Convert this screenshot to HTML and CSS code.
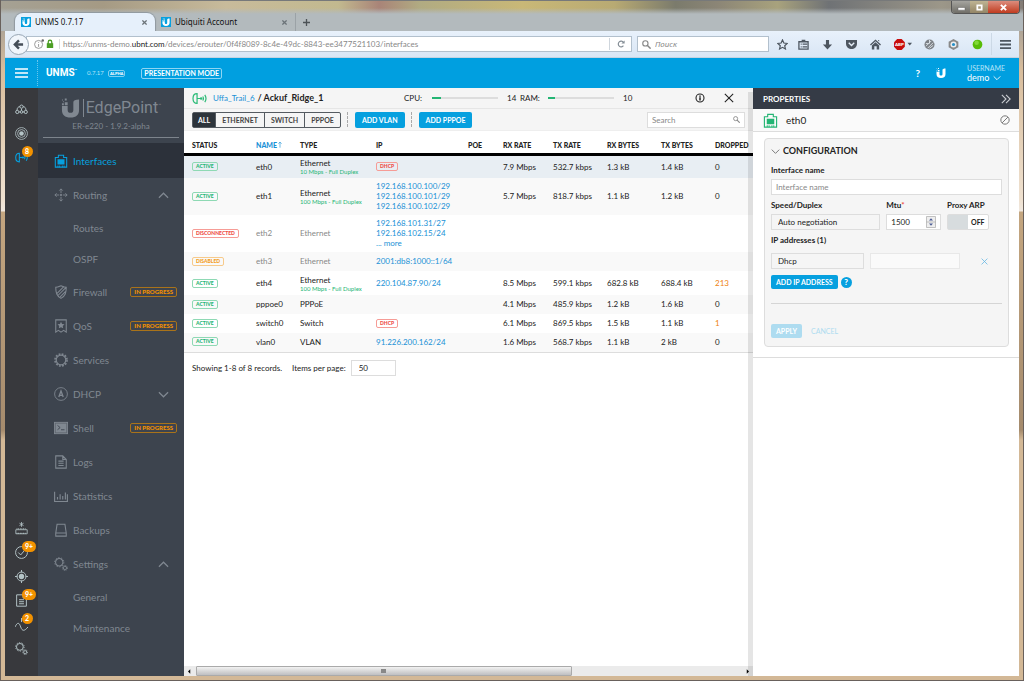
FILE: index.html
```html
<!doctype html>
<html lang="en">
<head>
  <meta charset="UTF-8">
  <meta name="viewport" content="width=device-width, initial-scale=1.0">
  <title>UNMS 0.7.17</title>
  <link rel="stylesheet" href="styles.css">
</head>
<body>
  <svg class="defs" aria-hidden="true">
    <symbol id="i-u" viewBox="0 0 20 20"><path fill="currentColor" d="M1 1h1v1H1zM4 0h2v2H4zM2 3h1v1H2zM4 4h3v3H4zM1 5h2v2H1z"/><path fill="currentColor" d="M1 8h6v4c0 2 1 3 3 3s3-1 3-3V4c0-2 2-3 6-3v11c0 5-3 8-9 8s-9-3-9-8z"/></symbol>
    <symbol id="i-port" viewBox="0 0 16 16"><path fill="none" stroke="currentColor" stroke-width="1.200" d="M1.500 4H5V1.500h6V4h3.500v11h-13z"/><path fill="currentColor" d="M4 6h8v6H4zM4 13h1v2H4zM6 13h1v2H6zM9 13h1v2H9zM11 13h1v2h-1z"/></symbol>
    <symbol id="i-route" viewBox="0 0 16 16"><path fill="none" stroke="currentColor" d="M8 1v5M8 10v5M1 8h5M10 8h5M6 3l2-2 2 2M6 13l2 2 2-2M3 6L1 8l2 2M13 6l2 2-2 2"/><circle cx="8" cy="8" r="1.200" fill="currentColor"/></symbol>
    <symbol id="i-shield" viewBox="0 0 16 16"><path fill="none" stroke="currentColor" stroke-width="1.200" d="M2 2.500C5 2.500 6 1.500 8 .8c2 .7 3 1.700 6 1.700C14 9 13 12.500 8 15.300 3 12.500 2 9 2 2.500zM3.500 9.500l8-8M4.500 12l9-9M7 13.500l6-6"/></symbol>
    <symbol id="i-qos" viewBox="0 0 16 16"><path fill="none" stroke="currentColor" stroke-width="1.200" d="M2 1h12v14l-3-2-3 2-3-2-3 2z"/><path fill="currentColor" d="M8 3l1.200 2.600 2.800.3-2 2 .5 2.800L8 9.300l-2.500 1.400.5-2.800-2-2 2.800-.3z"/></symbol>
    <symbol id="i-gear" viewBox="0 0 16 16"><circle cx="8" cy="8" r="5.500" fill="none" stroke="currentColor" stroke-width="1.400"/><circle cx="8" cy="8" r="6.900" fill="none" stroke="currentColor" stroke-width="1.800" stroke-dasharray="2.100 1.510"/></symbol>
    <symbol id="i-dhcp" viewBox="0 0 16 16"><circle cx="8" cy="8" r="7.300" fill="none" stroke="currentColor"/><path fill="none" stroke="currentColor" stroke-width="1.500" d="M5.500 11.500L8 4.500l2.500 7M6.500 9.500h3"/></symbol>
    <symbol id="i-shell" viewBox="0 0 16 16"><path fill="currentColor" d="M0 1h16v14H0z"/><path fill="none" stroke="#3d444e" d="M1.500 2.500h13v11h-13z" stroke-width=".5"/><path fill="none" stroke="#3d444e" d="M4 5l3 2.500L4 10M8 10h4"/></symbol>
    <symbol id="i-doc" viewBox="0 0 16 16"><path fill="none" stroke="currentColor" stroke-width="1.200" d="M2 1h8l4 4v10H2zM10 1v4h4M5 7h6M5 9.500h6M5 12h6"/></symbol>
    <symbol id="i-stats" viewBox="0 0 16 16"><path fill="none" stroke="currentColor" stroke-width="1.300" d="M.7 3v11.300H16M4 12V9M7 12V6M10 12V8M13 12V4M15.300 14V6"/></symbol>
    <symbol id="i-backup" viewBox="0 0 16 16"><path fill="none" stroke="currentColor" stroke-width="1.200" d="M3.500 1.500h9l1.500 10v3.500H2v-3.500zM2 11.500h12"/></symbol>
    <symbol id="i-gears" viewBox="0 0 16 16"><g fill="none" stroke="currentColor"><circle cx="6" cy="6" r="4.200" stroke-width="1.200"/><circle cx="6" cy="6" r="5.300" stroke-dasharray="1.600 1.700"/><circle cx="12.500" cy="12.500" r="1.900"/><circle cx="12.500" cy="12.500" r="2.900" stroke-dasharray="1.200 1.100"/></g></symbol>
    <symbol id="i-sites" viewBox="0 0 16 16"><g fill="none" stroke="currentColor" stroke-width="1.200"><circle cx="8" cy="4.500" r="2"/><circle cx="2.800" cy="11" r="2"/><circle cx="13.200" cy="11" r="2"/><circle cx="8" cy="11" r="1.600"/><path d="M8 7v2.500M2.500 9c0-3 1.500-4.500 3.500-4.500M13.500 9c0-3-1.500-4.500-3.500-4.500M5 11h1.500M9.500 11H11"/></g></symbol>
    <symbol id="i-target" viewBox="0 0 16 16"><g fill="none" stroke="currentColor"><circle cx="8" cy="8" r="7.300"/><circle cx="8" cy="8" r="4.800"/></g><circle cx="8" cy="8" r="2.800" fill="currentColor"/></symbol>
    <symbol id="i-device" viewBox="0 0 18 16"><path fill="none" stroke="currentColor" stroke-width="1.500" d="M6 2C2.500 2 1 5 1 8s1.500 6 5 6zM6 8h5M13 5.500c1 1.500 1 3.500 0 5M15.500 3.500c2 3 2 6 0 9"/><circle cx="11" cy="8" r="1.500" fill="currentColor"/></symbol>
    <symbol id="i-router" viewBox="0 0 16 16"><path fill="none" stroke="currentColor" d="M8 0v6M5.500 1.500l5 3M10.500 1.500l-5 3M1 9.500h14v5H1z"/><path fill="none" stroke="currentColor" stroke-width="1.500" stroke-dasharray="1 1" d="M2 8.500h12M2 14h12"/></symbol>
    <symbol id="i-check" viewBox="0 0 16 16"><path fill="none" stroke="currentColor" stroke-width="1.200" d="M8 .7a7.300 7.300 0 1 0 0 14.600A7.300 7.300 0 1 0 8 .7zM4 8l3 3 5-6"/></symbol>
    <symbol id="i-aim" viewBox="0 0 16 16"><circle cx="8" cy="8" r="3.300" fill="currentColor"/><path fill="none" stroke="currentColor" stroke-width="1.200" d="M8 2.500a5.500 5.500 0 1 0 0 11 5.500 5.500 0 1 0 0-11zM8 0v3M8 13v3M0 8h3M13 8h3"/></symbol>
    <symbol id="i-wave" viewBox="0 0 16 16"><path fill="none" stroke="currentColor" stroke-width="1.200" d="M0 11c3-6 5-6 7 0s5 5 9 0M8 0v5"/></symbol>
    <symbol id="i-up" viewBox="0 0 12 12"><path fill="none" stroke="currentColor" stroke-width="1.300" d="M1 8.500l5-5 5 5"/></symbol>
    <symbol id="i-down" viewBox="0 0 12 12"><path fill="none" stroke="currentColor" stroke-width="1.300" d="M1 3.500l5 5 5-5"/></symbol>
    <symbol id="i-x" viewBox="0 0 12 12"><path fill="none" stroke="currentColor" stroke-width="1.300" d="M1 1l10 10M11 1L1 11"/></symbol>
    <symbol id="i-x-bold" viewBox="0 0 12 12"><path fill="none" stroke="currentColor" stroke-width="3" d="M1 1l10 10M11 1L1 11"/></symbol>
    <symbol id="i-search" viewBox="0 0 12 12"><circle cx="4.500" cy="4.500" r="3.500" fill="none" stroke="currentColor" stroke-width="1.500"/><path stroke="currentColor" stroke-width="2" d="M7 7l4.500 4.500"/></symbol>
  </svg>

  <div class="window">
    <div class="titlebar">
      <div class="tabs">
        <div class="tab active"><span class="favicon"><svg><use href="#i-u"/></svg></span><span class="tab-name">UNMS 0.7.17</span><button class="tab-close" aria-label="Close tab"><svg><use href="#i-x-bold"/></svg></button></div>
        <div class="tab"><span class="favicon"><svg><use href="#i-u"/></svg></span><span class="tab-name">Ubiquiti Account</span><button class="tab-close" aria-label="Close tab"><svg><use href="#i-x-bold"/></svg></button></div>
        <button class="new-tab" aria-label="New tab"><svg viewBox="0 0 8 8"><path stroke="#4c5256" stroke-width="1.500" d="M4 0v8M0 4h8"/></svg></button>
      </div>
      <div class="win-buttons">
        <button aria-label="Minimize"><svg viewBox="0 0 10 8"><path fill="#fff" stroke="#555" stroke-width=".5" d="M1 4h8v3H1z"/></svg></button>
        <button class="max" aria-label="Maximize"><svg viewBox="0 0 10 8"><path fill="none" stroke="#fff" stroke-width="2" d="M2.500 1.500h5v5h-5z"/></svg></button>
        <button class="close" aria-label="Close"><svg viewBox="0 0 10 8"><path stroke="#fff" stroke-width="2.200" d="M2 1l6 6M8 1L2 7"/></svg></button>
      </div>
    </div>

    <div class="navbar">
      <button class="back" aria-label="Back"><svg viewBox="0 0 12 12"><path fill="none" stroke="#454e58" stroke-width="2.600" d="M6.500 1.500L2 6l4.500 4.500M2 6h9"/></svg></button>
      <div class="url">
        <svg class="info" viewBox="0 0 12 12"><circle cx="5.500" cy="6.500" r="4.800" fill="none" stroke="#888"/><path stroke="#888" d="M5.500 6v3.500M5.500 3.500v1"/><circle cx="10.500" cy="1.800" r="1.500" fill="#666"/></svg>
        <svg class="lock" viewBox="0 0 10 12"><path fill="#4c9e24" d="M1 5h8v6H1z"/><path fill="none" stroke="#4c9e24" stroke-width="1.600" d="M2.800 6V3.500a2.200 2.200 0 0 1 4.400 0V6"/></svg>
        <span class="address">https://unms-demo.<b>ubnt.com</b>/devices/erouter/0f4f8089-8c4e-49dc-8843-ee3477521103/interfaces</span>
        <button class="reload" aria-label="Reload"><svg viewBox="0 0 10 10"><path fill="none" stroke="#858e96" stroke-width="1.500" d="M8 7a3.500 3.500 0 1 1 0-4"/><path fill="#858e96" d="M9.500.5v4h-4z"/></svg></button>
      </div>
      <label class="web-search"><svg><use href="#i-search"/></svg><input type="text" placeholder="Поиск" aria-label="Поиск"></label>
      <div class="tools">
        <svg viewBox="0 0 12 12"><path fill="none" stroke="#4d5660" stroke-width="1.300" d="M6 1l1.500 3.400 3.600.4-2.700 2.500.8 3.600L6 9.100l-3.200 1.800.8-3.600L.9 4.800l3.600-.4z"/></svg>
        <svg viewBox="0 0 12 12"><path fill="none" stroke="#4d5660" stroke-width="1.400" d="M1 3h10v8H1zM3 5.500h1M5 5.500h5M3 8.500h1M5 8.500h5M4 1.500h4"/></svg>
        <svg viewBox="0 0 12 12"><path fill="#4d5660" d="M4.300 1h3.400v5H11l-5 5.500L1 6h3.300z"/></svg>
        <svg viewBox="0 0 12 12"><path fill="#4d5660" d="M0 1h12v4c0 4-3 6-6 6S0 9 0 5z"/><path fill="none" stroke="#e5eef8" stroke-width="1.500" d="M3 4l3 3 3-3"/></svg>
        <svg viewBox="0 0 12 12"><path fill="#4d5660" d="M6 .5L12 6l-1 1-5-4.500L1 7 0 6zM2 7l4-3.500L10 7v4.500H7.300V8H4.700v3.500H2zM8.500 1H10v2z"/></svg>
        <svg class="abp" viewBox="0 0 20 12"><path fill="#c80d0d" d="M3.500 0h5L12 3.500v5L8.500 12h-5L0 8.500v-5z"/><text x="1" y="8" font-family="Lato, sans-serif" font-size="5" font-weight="900" fill="#fff">ABP</text><path fill="#4d5660" d="M15 4h5l-2.500 3z"/></svg>
        <svg viewBox="0 0 12 12"><circle cx="6" cy="6" r="5.500" fill="#7c8186"/><path fill="none" stroke="#dfe5ea" d="M2 8l6-6M4 10l6-6M6 5V1M2 5h3M6 10l4-3"/></svg>
        <svg viewBox="0 0 12 12"><path fill="#898989" d="M6 0l5.300 3v6L6 12 .7 9V3z"/><circle cx="6" cy="6" r="3.300" fill="#eee"/><circle cx="6" cy="6" r="1.700" fill="#2790c8"/></svg>
        <svg viewBox="0 0 12 12"><circle cx="6" cy="6" r="5.300" fill="#58bc08"/><circle cx="5" cy="4" r="2.500" fill="#82d937"/></svg>
        <button class="menu" aria-label="Menu"><svg viewBox="0 0 12 12"><path stroke="#4d5660" stroke-width="2" d="M0 2h12M0 6h12M0 10h12"/></svg></button>
      </div>
    </div>

    <header class="app-header">
      <button class="burger" aria-label="Toggle menu"><svg viewBox="0 0 13 10"><path stroke="#fff" stroke-width="1.500" d="M0 1h13M0 5h13M0 9h13"/></svg></button>
      <span class="brand">UNMS<sup>™</sup></span>
      <span class="version">0.7.17</span><span class="alpha">ALPHA</span>
      <span class="mode">PRESENTATION MODE</span>
      <a class="help" href="#">?</a>
      <a class="ubnt" href="#" aria-label="Ubiquiti"><svg><use href="#i-u"/></svg></a>
      <button class="user"><small>USERNAME</small><span>demo <svg><use href="#i-down"/></svg></span></button>
    </header>

    <div class="app">
      <nav class="rail">
        <a href="#"><svg><use href="#i-sites"/></svg></a>
        <a href="#"><svg><use href="#i-target"/></svg></a>
        <a href="#" class="on"><svg><use href="#i-device"/></svg><span class="count">8</span></a>
        <a href="#" class="push"><svg><use href="#i-router"/></svg></a>
        <a href="#"><svg><use href="#i-check"/></svg><span class="count">9+</span></a>
        <a href="#"><svg><use href="#i-aim"/></svg></a>
        <a href="#"><svg><use href="#i-doc"/></svg><span class="count">9+</span></a>
        <a href="#"><svg><use href="#i-wave"/></svg><span class="count">2</span></a>
        <a href="#"><svg><use href="#i-gears"/></svg></a>
      </nav>

      <nav class="sidebar">
        <div class="product">
          <div class="product-logo"><svg><use href="#i-u"/></svg><span>EdgePoint<sup>™</sup></span></div>
          <p>ER-e220 - 1.9.2-alpha</p>
        </div>
        <a class="item active" href="#"><svg><use href="#i-port"/></svg>Interfaces</a>
        <a class="item" href="#"><svg><use href="#i-route"/></svg>Routing<svg class="arrow"><use href="#i-up"/></svg></a>
        <div class="sub"><a href="#">Routes</a><a href="#">OSPF</a></div>
        <a class="item" href="#"><svg><use href="#i-shield"/></svg>Firewall<span class="progress">IN PROGRESS</span></a>
        <a class="item" href="#"><svg><use href="#i-qos"/></svg>QoS<span class="progress">IN PROGRESS</span></a>
        <a class="item" href="#"><svg><use href="#i-gear"/></svg>Services</a>
        <a class="item" href="#"><svg><use href="#i-dhcp"/></svg>DHCP<svg class="arrow"><use href="#i-down"/></svg></a>
        <a class="item" href="#"><svg><use href="#i-shell"/></svg>Shell<span class="progress">IN PROGRESS</span></a>
        <a class="item" href="#"><svg><use href="#i-doc"/></svg>Logs</a>
        <a class="item" href="#"><svg><use href="#i-stats"/></svg>Statistics</a>
        <a class="item" href="#"><svg><use href="#i-backup"/></svg>Backups</a>
        <a class="item" href="#"><svg><use href="#i-gears"/></svg>Settings<svg class="arrow"><use href="#i-up"/></svg></a>
        <div class="sub"><a href="#">General</a><a href="#">Maintenance</a></div>
      </nav>

      <main class="main">
        <div class="device-bar">
          <div class="crumbs"><svg><use href="#i-device"/></svg><a href="#">Uffa_Trail_6</a><b>/ Ackuf_Ridge_1</b></div>
          <span class="meter-label">CPU:</span><div class="meter"><i style="width: 14%"></i></div><span class="meter-value">14</span>
          <span class="meter-label">RAM:</span><div class="meter"><i style="width: 10%"></i></div><span class="meter-value">10</span>
          <button class="info-btn" aria-label="Info"><svg viewBox="0 0 12 12"><circle cx="6" cy="6" r="4.800" fill="none" stroke="#222" stroke-width="1.300"/><path stroke="#222" stroke-width="1.800" d="M6 3v1.500M6 5v4"/></svg></button>
          <button class="close-btn" aria-label="Close"><svg><use href="#i-x"/></svg></button>
        </div>
        <div class="toolbar">
          <div class="filters"><button class="on">ALL</button><button>ETHERNET</button><button>SWITCH</button><button>PPPOE</button></div>
          <span class="sep"></span>
          <button class="btn">ADD VLAN</button>
          <span class="sep"></span>
          <button class="btn">ADD PPPOE</button>
          <label class="search"><input type="text" placeholder="Search" aria-label="Search"><svg><use href="#i-search"/></svg></label>
        </div>

        <table class="interfaces">
          <colgroup><col class="c-status"><col class="c-name"><col class="c-type"><col class="c-ip"><col class="c-poe"><col class="c-rx"><col class="c-bytes"><col class="c-bytes"><col class="c-bytes"><col class="c-drop"></colgroup>
          <thead>
            <tr><th>STATUS</th><th class="sorted">NAME<svg viewBox="0 0 5 8"><path fill="none" stroke="currentColor" stroke-width=".8" d="M2.500 8V1M.5 3l2-2 2 2"/></svg></th><th>TYPE</th><th>IP</th><th>POE</th><th>RX RATE</th><th>TX RATE</th><th>RX BYTES</th><th>TX BYTES</th><th>DROPPED</th></tr>
          </thead>
          <tbody>
            <tr class="tall selected"><td><span class="tag">ACTIVE</span></td><td>eth0</td><td>Ethernet<small>10 Mbps - Full Duplex</small></td><td><span class="tag red">DHCP</span></td><td></td><td>7.9 Mbps</td><td>532.7 kbps</td><td>1.3 kB</td><td>1.4 kB</td><td>0</td></tr>
            <tr class="odd"><td><span class="tag">ACTIVE</span></td><td>eth1</td><td>Ethernet<small>100 Mbps - Full Duplex</small></td><td><a href="#">192.168.100.100/29</a><a href="#">192.168.100.101/29</a><a href="#">192.168.100.102/29</a></td><td></td><td>5.7 Mbps</td><td>818.7 kbps</td><td>1.1 kB</td><td>1.2 kB</td><td>0</td></tr>
            <tr class="off"><td><span class="tag red">DISCONNECTED</span></td><td>eth2</td><td>Ethernet</td><td><a href="#">192.168.101.31/27</a><a href="#">192.168.102.15/24</a><a href="#">... more</a></td><td></td><td></td><td></td><td></td><td></td><td></td></tr>
            <tr class="odd off"><td><span class="tag orange">DISABLED</span></td><td>eth3</td><td>Ethernet</td><td><a href="#">2001:db8:1000::1/64</a></td><td></td><td></td><td></td><td></td><td></td><td></td></tr>
            <tr class="tall"><td><span class="tag">ACTIVE</span></td><td>eth4</td><td>Ethernet<small>100 Mbps - Full Duplex</small></td><td><a href="#">220.104.87.90/24</a></td><td></td><td>8.5 Mbps</td><td>599.1 kbps</td><td>682.8 kB</td><td>688.4 kB</td><td class="warn">213</td></tr>
            <tr class="odd"><td><span class="tag">ACTIVE</span></td><td>pppoe0</td><td>PPPoE</td><td></td><td></td><td>4.1 Mbps</td><td>485.9 kbps</td><td>1.2 kB</td><td>1.6 kB</td><td>0</td></tr>
            <tr><td><span class="tag">ACTIVE</span></td><td>switch0</td><td>Switch</td><td><span class="tag red">DHCP</span></td><td></td><td>6.1 Mbps</td><td>869.5 kbps</td><td>1.5 kB</td><td>1.1 kB</td><td class="warn">1</td></tr>
            <tr class="odd"><td><span class="tag">ACTIVE</span></td><td>vlan0</td><td>VLAN</td><td><a href="#">91.226.200.162/24</a></td><td></td><td>1.6 Mbps</td><td>568.7 kbps</td><td>1.1 kB</td><td>2 kB</td><td>0</td></tr>
          </tbody>
        </table>
        <div class="pager">
          <span>Showing 1-8 of 8 records.</span>
          <label for="per-page">Items per page:</label>
          <select id="per-page"><option>50</option></select>
        </div>
        <div class="hscroll"><svg viewBox="0 0 4 6"><path d="M3 0v6L0 3z"/></svg><span class="thumb"></span><svg class="end" viewBox="0 0 4 6"><path d="M1 0v6l3-3z"/></svg></div>
      </main>

      <aside class="panel">
        <div class="panel-head"><span>PROPERTIES</span><button aria-label="Collapse"><svg viewBox="0 0 12 12"><path fill="none" stroke="#c9ccd1" stroke-width="1.300" d="M1 1l5 5-5 5M6 1l5 5-5 5"/></svg></button></div>
        <div class="panel-name"><svg class="port"><use href="#i-port"/></svg><span>eth0</span><button aria-label="Disable"><svg viewBox="0 0 12 12"><path fill="none" stroke="#777" stroke-width="1.200" d="M6 1a5 5 0 1 0 0 10A5 5 0 1 0 6 1zM2.500 9.500l7-7"/></svg></button></div>
        <div class="panel-body">
          <form class="config">
            <h2><svg><use href="#i-down"/></svg>CONFIGURATION</h2>
            <label for="if-name">Interface name</label>
            <input id="if-name" type="text" placeholder="Interface name">
            <div class="fields">
              <div class="speed"><label for="speed">Speed/Duplex</label><select id="speed"><option>Auto negotiation</option></select></div>
              <div class="mtu"><label for="mtu">Mtu<em>*</em></label><div class="number"><input id="mtu" type="number" value="1500"><svg viewBox="0 0 10 12"><path fill="#eee" stroke="#aaa" stroke-width=".7" d="M.5.5h9v11h-9zM.5 6h9"/><path fill="#4b5b95" d="M3 4.500h4L5 2.200zM3 7.500h4L5 9.800z"/></svg></div></div>
              <div class="arp"><label for="arp">Proxy ARP</label><div class="toggle"><input id="arp" type="checkbox"><span>OFF</span></div></div>
            </div>
            <label for="ip-type">IP addresses (1)</label>
            <div class="ip-row">
              <select id="ip-type"><option>Dhcp</option></select>
              <input type="text" aria-label="IP address" disabled>
              <button type="button" aria-label="Remove address"><svg><use href="#i-x"/></svg></button>
            </div>
            <div class="add-row"><button type="button" class="btn">ADD IP ADDRESS</button><a class="hint" href="#">?</a></div>
            <div class="actions"><button type="button" class="btn" disabled>APPLY</button><button type="button" class="cancel" disabled>CANCEL</button></div>
          </form>
        </div>
      </aside>
    </div>
  </div>
</body>
</html>
```

FILE: styles.css
```css
* {
  margin: 0;
  padding: 0;
  box-sizing: border-box;
}
body {
  font-family: Lato, sans-serif;
  font-size: 8px;
  line-height: 10px;
  color: #222;
}
button, input, select {
  font: inherit;
  color: inherit;
  border: none;
  background: none;
  appearance: none;
}
button { white-space: nowrap; }
a {
  color: #1a91d6;
  text-decoration: none;
}
svg {
  display: block;
  flex-shrink: 0;
}
.defs {
  position: absolute;
  width: 0;
  height: 0;
}
.window {
  min-height: 100vh;
  display: flex;
  flex-direction: column;
  padding: 0 4px 4px;
  border: 1px solid #69615c;
  border-top: none;
  background: linear-gradient(#8f9294 0, #d8bd9c 70px, #efe1d0 200px, #f0e8df 211px, #c4a680 212px, #a58b6d 430px, #d3b896 440px, #d3b896 100%);
}

/* browser chrome */
.titlebar {
  height: 31px;
  margin: 0 -4px;
  padding: 12px 0 0 14px;
  display: flex;
  justify-content: space-between;
  border-top: 1px solid #77797a;
  background: linear-gradient(rgba(179,186,189,0) 7px, #b3babd 13px),
    linear-gradient(90deg, #a5a194, #a59a84 10%, #c8bb9b 22%, #c2b98f 33%, #a98478 37%, #b1ab82 41%, #c9b877 51%, #b8aa73 60%, #7b7b6c 66%, #8b8576 70%, #a8a27d 76%, #6f7275 81%, #9c9789 92%, #847d76);
}
.tabs {
  display: flex;
  font-family: "Noto Sans", sans-serif;
}
.tab {
  width: 140px;
  height: 18px;
  padding: 0 8px 0 6px;
  display: flex;
  align-items: center;
  border-radius: 8px 8px 0 0;
  color: #111;
}
.tab.active {
  background: #e6f0fb;
  box-shadow: 0 0 1px 1px #8f989f;
  clip-path: inset(-2px -2px 0 -2px);
}
.favicon {
  width: 10px;
  height: 10px;
  margin-right: 4px;
  background: #06a0df;
  color: #fff;
}
.favicon svg {
  width: 8px;
  height: 8px;
  margin: 1px;
}
.tab-name { flex: 1; }
.tab-close svg {
  width: 5px;
  height: 5px;
  color: #6b7378;
}
.new-tab {
  padding: 0 8px 0 7px;
  border-left: 1px solid #9ba2a6;
}
.new-tab svg {
  width: 7px;
  height: 7px;
}
.win-buttons {
  display: flex;
  height: 13px;
  margin: -12px 3px 0 0;
  border: 1px solid #555;
  border-top: none;
  border-radius: 0 0 4px 4px;
  overflow: hidden;
}
.win-buttons button {
  width: 18px;
  display: flex;
  align-items: center;
  justify-content: center;
  background: linear-gradient(#a5a49f, #706e68);
}
.win-buttons .max { background: linear-gradient(#bfb493, #938566); }
.win-buttons .close {
  width: 31px;
  background: linear-gradient(#dc8d7d, #c13c20);
}
.win-buttons svg {
  width: 9px;
  height: 7px;
}
.navbar {
  height: 27px;
  padding: 0 8px 0 3px;
  display: flex;
  align-items: center;
  font-family: "Noto Sans", sans-serif;
  background: linear-gradient(#e8f1fb, #d9e6f5);
  border-bottom: 1px solid #c4d3e2;
}
.back {
  width: 21px;
  height: 21px;
  display: flex;
  align-items: center;
  justify-content: center;
  border: 1px solid #98a6b4;
  border-radius: 50%;
  background: #f1f6fc;
  z-index: 1;
}
.back svg {
  width: 11px;
  height: 11px;
}
.url {
  flex: 1;
  height: 16px;
  margin: 0 5px 0 -3px;
  padding-left: 7px;
  display: flex;
  align-items: center;
  background: #fff;
  border: 1px solid #b2c0cd;
  color: #888;
}
.url b {
  color: #222;
  font-weight: 400;
}
.info {
  width: 10px;
  height: 10px;
}
.lock {
  width: 8px;
  height: 10px;
  margin: 0 5px 0 2px;
}
.address {
  flex: 1;
  padding-left: 3px;
  border-left: 1px solid #ddd;
  font-family: Lato, sans-serif;
}
.reload {
  width: 22px;
  height: 12px;
  display: flex;
  align-items: center;
  justify-content: center;
  border-left: 1px solid #cfd6dd;
}
.reload svg {
  width: 8px;
  height: 8px;
}
.web-search {
  width: 132px;
  height: 16px;
  padding: 0 4px;
  display: flex;
  align-items: center;
  gap: 4px;
  background: #fff;
  border: 1px solid #b2c0cd;
}
.web-search svg {
  width: 9px;
  height: 9px;
  color: #888;
}
.web-search input {
  width: 100%;
  font-style: italic;
}
.tools {
  display: flex;
  align-items: center;
  gap: 13px;
  padding-left: 8px;
}
.tools svg {
  width: 11px;
  height: 11px;
}
.tools > svg:first-child { margin-right: -3px; }
.tools .abp {
  width: 18px;
  margin-right: -1px;
}
.menu {
  height: 22px;
  margin-left: -5px;
  padding-left: 8px;
  border-left: 1px solid #ccd9e6;
}

/* UNMS header */
.app-header {
  height: 30px;
  padding: 0 14px 0 0;
  display: flex;
  align-items: center;
  background: #009fe0;
  color: #fff;
}
.burger {
  width: 33px;
  height: 26px;
  padding-left: 10px;
  border-right: 1px dotted #69c6ed;
}
.burger svg {
  width: 13px;
  height: 10px;
}
.brand {
  width: 41px;
  margin-left: 8px;
  font-family: Roboto, sans-serif;
  font-size: 10px;
  font-weight: 700;
}
.brand sup {
  font-size: 4px;
  line-height: 0;
}
.version {
  width: 21px;
  font-size: 6px;
  color: #b5e3f7;
}
.alpha {
  padding: 0 1px;
  border: 1px solid #7fcff0;
  border-radius: 2px;
  font-size: 4px;
  font-weight: 900;
  line-height: 5px;
}
.mode {
  margin-left: 16px;
  padding: 0 2px;
  border: 1px solid #8ed5f2;
  border-radius: 2px;
  font-size: 7px;
  font-weight: 700;
  line-height: 9px;
}
.help {
  margin-left: auto;
  font-size: 10px;
  font-weight: 700;
  color: #fff;
}
.ubnt {
  margin: 0 21px 0 16px;
  color: #fff;
}
.ubnt svg {
  width: 10px;
  height: 10px;
}
.user {
  text-align: left;
  line-height: 10px;
}
.user small {
  display: block;
  font-size: 7px;
  line-height: 9px;
  color: #b5e3f7;
}
.user span {
  display: flex;
  align-items: center;
  gap: 4px;
  font-size: 9px;
}
.user svg {
  width: 8px;
  height: 8px;
}

.app {
  flex: 1;
  display: grid;
  grid-template-columns: 33px 146px 1fr 266px;
}
.rail {
  padding: 15px 0 21px;
  display: flex;
  flex-direction: column;
  align-items: center;
  gap: 11px;
  background: #38393d;
}
.rail a {
  position: relative;
  color: #b4c3c6;
}
.rail svg {
  width: 13px;
  height: 13px;
}
.rail .on { color: #06a0df; }
.rail .push { margin-top: auto; }
.count {
  position: absolute;
  left: 7px;
  top: -5px;
  min-width: 11px;
  padding: 0 3px;
  border-radius: 6px;
  background: #f39200;
  color: #fff;
  font-size: 7px;
  font-weight: 900;
  line-height: 11px;
}

.sidebar {
  background: #3d444e;
  color: #808891;
  font-size: 10px;
  line-height: 12px;
}
.product {
  height: 50px;
  margin: 0 5px 5px;
  padding-top: 9px;
  border-bottom: 1px solid #7d848c;
}
.product-logo {
  display: flex;
  align-items: center;
  justify-content: center;
  gap: 3px;
  height: 22px;
}
.product-logo svg {
  width: 19px;
  height: 20px;
}
.product-logo span {
  padding-left: 2px;
  border-left: 1px solid #808891;
  font-family: Roboto, sans-serif;
  font-size: 16px;
  line-height: 18px;
}
.product-logo sup {
  font-size: 5px;
  line-height: 0;
}
.product p {
  text-align: center;
  font-size: 8px;
  line-height: 14px;
}
.item {
  height: 34px;
  padding: 0 7px 0 16px;
  display: flex;
  align-items: center;
  gap: 5px;
  color: inherit;
}
.item svg {
  width: 14px;
  height: 14px;
}
.item.active {
  height: 35px;
  background: #2c313a;
  color: #06a0df;
}
.item .arrow {
  width: 11px;
  height: 11px;
  margin: 0 8px 0 auto;
}
.progress {
  margin-left: auto;
  padding: 0 3px;
  border: 1px solid #a9731a;
  border-radius: 2px;
  color: #f39200;
  font-size: 6px;
  font-weight: 900;
  line-height: 8px;
}
.sub { padding-top: 1px; }
.sub a {
  display: block;
  padding-left: 35px;
  line-height: 31px;
  color: inherit;
}

.main {
  position: relative;
  display: flex;
  flex-direction: column;
  min-width: 0;
  background: #fff;
}
/* strip left by the properties panel over the content */
.main::after {
  content: '';
  position: absolute;
  top: 4px;
  right: 0;
  bottom: 0;
  width: 5px;
  background: rgba(0,0,0,0.1);
}
.device-bar {
  height: 21px;
  padding: 0 19px 0 8px;
  display: flex;
  align-items: center;
  background: #f5f5f5;
  border-bottom: 1px solid #e6e6e6;
}
.crumbs {
  width: 212px;
  display: flex;
  align-items: center;
  gap: 3px;
}
.crumbs svg {
  width: 15px;
  height: 13px;
  margin-right: 3px;
  color: #2dbb78;
}
.crumbs b { font-size: 9px; }
.meter-label {
  width: 28px;
}
.meter {
  width: 66px;
  height: 2px;
  margin-right: 9px;
  background: #ddd;
}
.meter i {
  display: block;
  height: 2px;
  background: #24b574;
}
.meter-value { width: 13px; }
.info-btn { margin: 0 19px 0 auto; }
.info-btn svg, .close-btn svg {
  width: 10px;
  height: 10px;
}
.toolbar {
  height: 22px;
  padding: 0 8px;
  display: flex;
  align-items: center;
  background: #f5f5f5;
  border-bottom: 1px solid #eee;
}
.filters {
  display: flex;
  border: 1px solid #555b61;
  border-radius: 2px;
  font-size: 7px;
  font-weight: 700;
}
.filters button {
  padding: 0 6px;
  line-height: 14px;
  color: #444;
}
.filters button + button { border-left: 1px solid #555b61; }
.filters .on {
  padding: 0 5px;
  background: #2d343b;
  color: #fff;
}
.sep {
  height: 15px;
  margin: 0 7px 0 6px;
  border-left: 1px dashed #aaa;
}
.btn {
  padding: 0 7px;
  border-radius: 2px;
  background: #06a0df;
  color: #fff;
  font-size: 7px;
  font-weight: 700;
  line-height: 16px;
}
.search {
  width: 98px;
  height: 16px;
  margin-left: auto;
  padding: 0 4px;
  display: flex;
  align-items: center;
  background: #fff;
  border: 1px solid #ddd;
}
.search input {
  flex: 1;
  width: 0;
}
.search svg {
  width: 7px;
  height: 7px;
  color: #888;
}
::placeholder {
  color: #888;
  opacity: 1;
}

.interfaces {
  width: 100%;
  table-layout: fixed;
  border-collapse: collapse;
  border-bottom: 1px solid #ddd;
}
.c-status { width: 72px; }
.c-name { width: 44px; }
.c-type { width: 76px; }
.c-ip { width: 92px; }
.c-poe { width: 35px; }
.c-rx { width: 50px; }
.c-bytes { width: 54px; }
.c-drop { width: 38px; }
.interfaces th {
  height: 23px;
  padding-top: 6px;
  font-size: 7px;
  font-weight: 900;
  text-align: left;
  white-space: nowrap;
  border-bottom: 3px solid #000;
}
.interfaces .sorted { color: #1a91d6; }
.sorted svg {
  display: inline;
  width: 4px;
  height: 7px;
  margin-left: 1px;
}
.interfaces td {
  height: 19px;
  padding: 3px 0 4px;
  white-space: nowrap;
}
.interfaces .tall td {
  height: 24px;
  padding: 2px 0;
}
.interfaces th:first-child, .interfaces td:first-child, .interfaces .tall td:first-child { padding-left: 8px; }
.interfaces td a { display: block; }
.interfaces small {
  display: block;
  font-size: 6px;
  line-height: 7px;
  color: #24b574;
}
.interfaces .odd { background: #f9f9f9; }
.interfaces .selected { background: #e8eef3; }
.interfaces .off { color: #888; }
.interfaces .warn { color: #ee8210; }
.tag {
  display: block;
  width: fit-content;
  padding: 0 3px;
  border: 1px solid #8ed9b4;
  border-radius: 2px;
  color: #24b574;
  font-size: 5px;
  font-weight: 900;
  line-height: 7px;
}
.tag.red {
  border-color: #f69c96;
  color: #ee4b43;
}
.tag.orange {
  border-color: #f7ca8b;
  color: #f39c20;
}
.pager {
  padding: 7px 8px;
  display: flex;
  align-items: center;
}
.pager label { margin: 0 5px 0 10px; }
.pager select {
  width: 45px;
  height: 16px;
  padding-left: 7px;
  border: 1px solid #ddd;
}
.hscroll {
  height: 10px;
  margin-top: auto;
  padding: 0 4px;
  display: flex;
  align-items: center;
  gap: 5px;
  background: #ebebeb;
}
.hscroll svg {
  width: 3px;
  height: 5px;
}
.hscroll .end { margin-left: auto; }
.thumb {
  width: 67%;
  height: 10px;
  border: 1px solid #aaa;
  border-radius: 1px;
  background: linear-gradient(90deg, #888, #888) center / 5px 4px no-repeat, linear-gradient(#f2f2f2, #d8d8d8 50%, #bfbfc1);
}

.panel { background: #fff; }
.panel-head {
  height: 21px;
  padding: 0 8px 0 10px;
  display: flex;
  align-items: center;
  justify-content: space-between;
  background: #353b46;
  color: #fff;
  font-weight: 700;
}
.panel button svg {
  width: 10px;
  height: 10px;
}
.panel-name {
  height: 23px;
  padding: 0 9px 0 10px;
  display: flex;
  align-items: center;
  gap: 8px;
  background: #fafafa;
  border-bottom: 1px solid #ddd;
  font-size: 10px;
}
.panel-name .port {
  width: 15px;
  height: 15px;
  color: #24b574;
}
.panel-name button { margin-left: auto; }
.panel-body {
  padding: 6px 10px 10px 11px;
  border-bottom: 1px solid #ddd;
}
.config {
  padding: 6px 6px 8px;
  background: #f5f5f5;
  border: 1px solid #ddd;
  border-radius: 4px;
}
.config h2 {
  margin-bottom: 8px;
  display: flex;
  align-items: center;
  gap: 3px;
  font-size: 9px;
  line-height: 12px;
}
.config h2 svg {
  width: 9px;
  height: 9px;
  color: #777;
}
.config label {
  display: block;
  margin-bottom: 4px;
  font-weight: 700;
}
.config em {
  color: #ee4b43;
  font-style: normal;
}
.config input, .config select {
  display: block;
  width: 100%;
  height: 16px;
  padding: 0 4px;
  border: 1px solid #ddd;
  background: #fff;
}
.config select {
  padding-left: 6px;
  background: #f5f5f5;
}
.fields {
  display: flex;
  gap: 6px;
  margin: 5px 0;
}
.speed { flex: 2; }
.mtu { flex: 1; }
.arp {
  width: 55px;
}
.config .number, .config .toggle {
  display: flex;
  align-items: center;
  height: 16px;
  border: 1px solid #ddd;
  background: #fff;
}
.config .number input {
  height: 14px;
  border: none;
  appearance: textfield;
}
.number input::-webkit-inner-spin-button { appearance: none; }
.number svg {
  width: 10px;
  height: 12px;
  margin-right: 4px;
}
.config .toggle {
  width: 42px;
  gap: 3px;
  border-radius: 2px;
}
.config .toggle input {
  width: 20px;
  height: 14px;
  border: none;
  background: #d7dcde;
}
.toggle span {
  font-size: 7px;
  font-weight: 700;
}
.ip-row {
  display: flex;
  align-items: center;
  gap: 6px;
  margin: 8px 0 6px;
}
.ip-row select, .ip-row input {
  flex: 1;
  width: 0;
}
.config .ip-row input:disabled {
  border-color: #e8e8e8;
  background: #fafafa;
}
.ip-row button {
  width: 36px;
  display: flex;
  justify-content: center;
  color: #5fb4e3;
}
.panel .ip-row svg {
  width: 7px;
  height: 7px;
}
.add-row {
  display: flex;
  align-items: center;
  gap: 3px;
  padding-bottom: 14px;
  border-bottom: 1px solid #d5d5d5;
}
.config .btn {
  padding: 0 5px;
  line-height: 14px;
}
.hint {
  width: 11px;
  border-radius: 50%;
  background: #06a0df;
  color: #fff;
  font-weight: 900;
  line-height: 11px;
  text-align: center;
}
.actions {
  display: flex;
  align-items: center;
  gap: 9px;
  margin-top: 20px;
}
.btn:disabled { background: #aedcf0; }
.cancel {
  font-size: 7px;
  color: #aedcf0;
}
```
